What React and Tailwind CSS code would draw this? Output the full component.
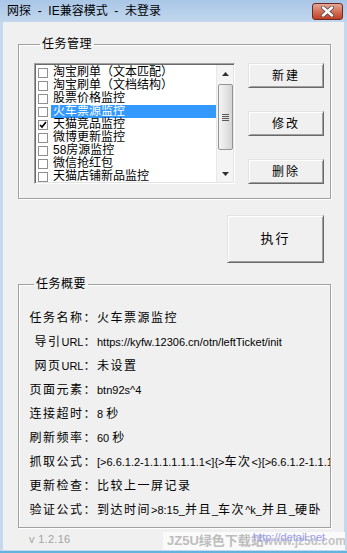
import React from 'react';

const FONT = "font-['Liberation_Sans','Noto_Sans_CJK_SC',sans-serif]";

const tasks = [
  { name: '淘宝刷单（文本匹配）', checked: false },
  { name: '淘宝刷单（文档结构）', checked: false },
  { name: '股票价格监控', checked: false },
  { name: '火车票源监控', checked: false, selected: true },
  { name: '天猫竞品监控', checked: true },
  { name: '微博更新监控', checked: false },
  { name: '58房源监控', checked: false },
  { name: '微信抢红包', checked: false },
  { name: '天猫店铺新品监控', checked: false },
];

const summary = [
  ['任务名称', '火车票源监控'],
  ['导引URL', 'https://kyfw.12306.cn/otn/leftTicket/init'],
  ['网页URL', '未设置'],
  ['页面元素', 'btn92s^4'],
  ['连接超时', '8 秒'],
  ['刷新频率', '60 秒'],
  ['抓取公式', '[>6.6.1.2-1.1.1.1.1.1.1<]{>车次<}[>6.6.1.2-1.1.1.1.1.1.2<]'],
  ['更新检查', '比较上一屏记录'],
  ['验证公式', '到达时间>8:15_并且_车次^k_并且_硬卧'],
];

// split CJK and latin runs, the latin ones are set smaller and tighter
const Mixed = ({ text }) => (
  <span className="whitespace-pre">
    {text.split(/([\u3000-\u9fff\uff00-\uffef]+)/).filter(Boolean).map((part, i) =>
      /[\u3000-\u9fff\uff00-\uffef]/.test(part) ? (
        <span key={i} className="text-[12px] tracking-[1.5px]">{part}</span>
      ) : (
        <span key={i} className="text-[11px]">{part}</span>
      )
    )}
  </span>
);

const Btn = ({ children, className = '' }) => (
  <button
    className={`flex items-center justify-center bg-[#f0f0f0] border border-t-[#e3e3e3] border-l-[#e3e3e3] border-r-[#696969] border-b-[#696969] shadow-[inset_1px_1px_0_#fff,inset_-1px_-1px_0_#a0a0a0] text-[12px] tracking-[2px] text-black ${className}`}
  >
    {children}
  </button>
);

const Check = ({ on }) => (
  <div className="w-[10px] h-[10px] shrink-0 border border-[#8e8f8f] bg-white flex items-center justify-center">
    {on && (
      <svg width="8" height="8" viewBox="0 0 8 8">
        <path d="M1 4 L3 6 L7 1" stroke="#000" strokeWidth="1.6" fill="none" />
      </svg>
    )}
  </div>
);

const Scrollbar = () => (
  <div className="w-[17px] h-full shrink-0 bg-[#f4f4f4] border-l border-[#e8e8e8] flex flex-col items-center">
    <div className="h-[17px] w-full flex items-center justify-center">
      <svg width="7" height="4" viewBox="0 0 7 4"><path d="M0 4 L3.5 0 L7 4 Z" fill="#303030" /></svg>
    </div>
    <div className="mt-[2px] w-[15px] h-[66px] rounded-[2px] border border-[#959595] bg-gradient-to-r from-[#f4f4f4] via-[#e6e6e6] to-[#d4d4d4] flex flex-col items-center justify-center gap-[1px]">
      <div className="w-[7px] h-[1px] bg-[#5a5a5a]" />
      <div className="w-[7px] h-[1px] bg-[#5a5a5a]" />
      <div className="w-[7px] h-[1px] bg-[#5a5a5a]" />
      <div className="w-[7px] h-[1px] bg-[#5a5a5a]" />
    </div>
    <div className="flex-1" />
    <div className="h-[17px] w-full flex items-center justify-center">
      <svg width="7" height="4" viewBox="0 0 7 4"><path d="M0 0 L3.5 4 L7 0 Z" fill="#303030" /></svg>
    </div>
  </div>
);

const Group = ({ title, className = '', children }) => (
  <fieldset
    className={`border border-[#a0a0a0] shadow-[inset_1px_1px_0_#fff,1px_1px_0_#fff] ${className}`}
  >
    <legend className="ml-[6px] px-[2px] text-[12px] leading-[14px] tracking-[0.5px]">{title}</legend>
    {children}
  </fieldset>
);

export default function App() {
  return (
    <div className={`w-[347px] h-[553px] flex flex-col bg-[#c4d8ee] border-b-2 border-b-[#63b5e0] overflow-hidden text-black ${FONT}`}>
      {/* title bar */}
      <div className="h-[22px] shrink-0 flex items-start justify-between pl-[7px] pr-[4px] bg-gradient-to-b from-[#a9c6e6] to-[#c2d7ed]">
        <div className="text-[12px] leading-[22px] whitespace-pre">网探  -  IE兼容模式  -  未登录</div>
        <div className="mt-[3px] w-[31px] h-[17px] rounded-[3px] border border-[#6b2a22] bg-gradient-to-b from-[#e6a695] via-[#d4705a] to-[#c23c22] flex items-center justify-center">
          <svg width="13" height="11" viewBox="0 0 13 11">
            <path d="M2 1.5 L11 9.5 M11 1.5 L2 9.5" stroke="#4a4a4a" strokeWidth="4" strokeLinecap="round" />
            <path d="M2 1.5 L11 9.5 M11 1.5 L2 9.5" stroke="#fff" strokeWidth="2.4" strokeLinecap="round" />
          </svg>
        </div>
      </div>

      {/* client area */}
      <div className="flex-1 mx-[3px] mb-[2px] bg-[#f0f0f0] flex flex-col">
        <Group title="任务管理" className="mt-[15px] ml-[15px] w-[313px] pt-[12px] pl-[15px] pb-[14px]">
          <div className="flex gap-[13px]">
            <div className="w-[201px] h-[121px] flex bg-white border border-t-[#a0a0a0] border-l-[#a0a0a0] border-r-white border-b-white shadow-[inset_1px_1px_0_#696969,inset_-1px_-1px_0_#e3e3e3] p-[1px]">
              <div className="flex-1 pt-[1px] overflow-hidden">
                {tasks.map((t) => (
                  <div key={t.name} className="h-[13px] flex items-center pl-[2px]">
                    <Check on={t.checked} />
                    <div
                      className={`ml-[3px] flex-1 h-full pl-[2px] text-[12px] leading-[13px] whitespace-nowrap ${t.selected ? 'bg-[#3399ff] text-white' : ''}`}
                    >
                      {t.name}
                    </div>
                  </div>
                ))}
              </div>
              <Scrollbar />
            </div>
            <div className="flex flex-col gap-[23px]">
              <Btn className="w-[76px] h-[25px]">新建</Btn>
              <Btn className="w-[76px] h-[25px]">修改</Btn>
              <Btn className="w-[76px] h-[25px]">删除</Btn>
            </div>
          </div>
        </Group>

        <div className="mt-[16px] flex">
          <Btn className="ml-[224px] w-[97px] h-[48px] text-[13px]">执行</Btn>
        </div>

        <Group title="任务概要" className="mt-[14px] ml-[15px] w-[313px] pt-[14px] pl-[9px] pb-[6px]">
          <div className="grid grid-cols-[69px_1fr]">
            {summary.map(([k, v]) => (
              <React.Fragment key={k}>
                <div className="h-[24px] flex items-center justify-end whitespace-nowrap">
                  <Mixed text={k + '：'} />
                </div>
                <div className="h-[24px] flex items-center whitespace-nowrap overflow-hidden pr-[2px]">
                  <Mixed text={v} />
                </div>
              </React.Fragment>
            ))}
          </div>
        </Group>

        <div className="flex-1 flex items-center">
          <div className="ml-[26px] text-[11px] text-[#a3a3a3] tracking-[0.3px]">v 1.2.16</div>
          <div className="relative ml-auto mr-[-1px] mt-[4px] w-[182px] h-[18px] bg-[#fafafa] flex items-center pl-[4px] whitespace-nowrap overflow-hidden">
            <span className="text-[13px] font-bold text-[#bdbdbd]">JZ5U绿色下载站</span>
            <span className="text-[12px] font-bold text-[#c4c4c4]">www.jz5u.com</span>
            <span className="absolute left-[90px] top-[0px] text-[11px] leading-[11px] text-[#9a9cf0]">http://detail.net</span>
          </div>
        </div>
      </div>
    </div>
  );
}
